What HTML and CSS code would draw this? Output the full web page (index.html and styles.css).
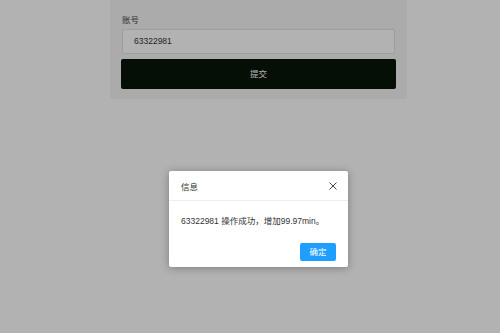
FILE: index.html
```html
<!DOCTYPE html>
<html lang="zh">
<head>
<meta charset="utf-8">
<link rel="stylesheet" href="styles.css">
</head>
<body>
<div class="page">
  <form class="card">
    <label class="label">账号</label>
    <div class="input">63322981</div>
    <div class="btn">提交</div>
  </form>
</div>
<div class="shade"></div>
<div class="layer">
  <div class="layer-title">
    <span>信息</span>
    <svg class="close" width="8" height="8" viewBox="0 0 8 8"><path d="M0.5 0.5L7.5 7.5M7.5 0.5L0.5 7.5" stroke="#444" stroke-width="1" fill="none"/></svg>
  </div>
  <div class="layer-content">63322981 操作成功，增加99.97min。</div>
  <div class="layer-btns"><span class="ok">确定</span></div>
</div>
</body>
</html>
```
FILE: styles.css
```css
* { box-sizing: border-box; }
html, body { margin: 0; padding: 0; }
body {
  width: 500px;
  height: 333px;
  background: #fff;
  font-family: "Liberation Sans", "Noto Sans CJK SC", sans-serif;
  overflow: hidden;
  position: relative;
}
.page { padding-left: 110px; }
.card {
  width: 297px;
  height: 99px;
  background: #f5f5f5;
  border-radius: 0 0 3px 3px;
  padding: 14px 11px 0 11px;
  margin: 0;
  display: flex;
  flex-direction: column;
}
.label {
  font-size: 8.5px;
  color: #444;
  line-height: 12px;
  height: 15px;
  padding-left: 1px;
}
.input {
  height: 25px;
  margin: 0 1px;
  border: 1px solid #e2e2e2;
  border-radius: 2px;
  background: #fff;
  font-size: 8.5px;
  color: #333;
  line-height: 23px;
  padding-left: 11px;
}
.btn {
  margin-top: 5px;
  height: 30px;
  background: #081609;
  border-radius: 2px;
  color: #fff;
  font-size: 8.5px;
  line-height: 30px;
  text-align: center;
}
.shade {
  position: absolute;
  inset: 0;
  background: rgba(0,0,0,0.3);
}
.layer {
  position: absolute;
  left: 169px;
  top: 171px;
  width: 179px;
  height: 96px;
  background: #fff;
  border-radius: 2px;
  box-shadow: 0 1px 8px rgba(0,0,0,0.3);
  display: flex;
  flex-direction: column;
}
.layer-title {
  height: 30px;
  border-bottom: 1px solid #eee;
  padding: 0 11px 0 12px;
  display: flex;
  align-items: center;
  justify-content: space-between;
  font-size: 8.5px;
  color: #333;
}
.close { display: block; }
.layer-content {
  padding: 14px 12px 0 12px;
  font-size: 8.5px;
  color: #333;
  line-height: 12px;
  height: 42px;
}
.layer-btns {
  display: flex;
  justify-content: flex-end;
  padding-right: 12px;
}
.ok {
  width: 36px;
  height: 18px;
  background: #1e9fff;
  color: #fff;
  font-size: 8.5px;
  line-height: 18px;
  text-align: center;
  border-radius: 2px;
}
```
